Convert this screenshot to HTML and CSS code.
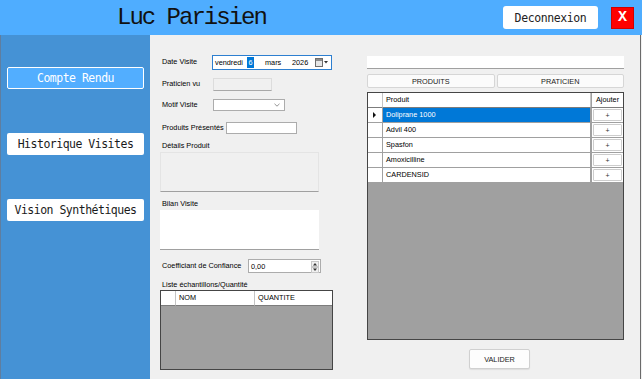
FILE: index.html
```html
<!DOCTYPE html>
<html lang="fr">
<head>
    <meta charset="UTF-8">
    <meta name="viewport" content="width=device-width, initial-scale=1.0">
    <title>Compte Rendu</title>
    <link rel="stylesheet" href="styles.css">
</head>
<body>
    <!-- barre du haut -->
    <header class="top-bar">
        <div class="user-name">Luc Parisien</div>
        <button class="logout-btn">Deconnexion</button>
        <button class="close-btn">X</button>
    </header>

    <div class="main">
        <!-- menu de gauche -->
        <nav class="side-menu">
            <button class="menu-btn active">Compte Rendu</button>
            <button class="menu-btn">Historique Visites</button>
            <button class="menu-btn">Vision Synthétiques</button>
        </nav>

        <section class="content">
            <!-- formulaire -->
            <div class="form-col">
                <div class="field-row row-date">
                    <span class="lbl lbl-date">Date Visite</span>
                    <div class="date-picker">
                        <span class="dp-day">vendredi</span>
                        <span class="dp-num">6</span>
                        <span class="dp-month">mars</span>
                        <span class="dp-year">2026</span>
                        <svg class="dp-icon" width="14" height="9" viewBox="0 0 14 9">
                            <rect x="0.5" y="0.5" width="7" height="8" fill="#e6e6e6" stroke="#6d6d6d"/>
                            <rect x="1" y="1" width="6" height="2" fill="#8a8a8a"/>
                            <path d="M9 3 L13 3 L11 5.5 Z" fill="#333"/>
                        </svg>
                    </div>
                </div>

                <div class="field-row row-praticien">
                    <span class="lbl">Praticien vu</span>
                    <div class="input input-disabled w-praticien"></div>
                </div>

                <div class="field-row row-motif">
                    <span class="lbl">Motif Visite</span>
                    <div class="input combo w-motif">
                        <svg width="6" height="4" viewBox="0 0 6 4">
                            <path d="M0.5 0.8 L3 3.2 L5.5 0.8" fill="none" stroke="#777" stroke-width="0.8"/>
                        </svg>
                    </div>
                </div>

                <div class="field-row row-produits">
                    <span class="lbl lbl-wide">Produits Présentés</span>
                    <div class="input w-produits"></div>
                </div>

                <div class="block-lbl lbl-details">Détails Produit</div>
                <div class="memo memo-readonly"></div>

                <div class="block-lbl lbl-bilan">Bilan Visite</div>
                <div class="memo"></div>

                <div class="field-row row-coef">
                    <span class="lbl lbl-coef">Coefficiant de Confiance</span>
                    <div class="input spin w-coef">
                        <span class="spin-value">0,00</span>
                        <div class="spin-btns">
                            <span class="spin-btn">
                                <svg width="6" height="4" viewBox="0 0 6 4"><path d="M1 3.5 L5 3.5 L3 1 Z" fill="#333"/></svg>
                            </span>
                            <span class="spin-btn">
                                <svg width="6" height="4" viewBox="0 0 6 4"><path d="M1 0.5 L5 0.5 L3 3 Z" fill="#333"/></svg>
                            </span>
                        </div>
                    </div>
                </div>

                <div class="block-lbl lbl-liste">Liste échantillons/Quantité</div>
                <div class="grid grid-samples">
                    <table class="grid-table">
                        <colgroup>
                            <col style="width: 15px">
                            <col style="width: 79px">
                            <col>
                        </colgroup>
                        <tr>
                            <th class="row-head"></th>
                            <th>NOM</th>
                            <th>QUANTITE</th>
                        </tr>
                    </table>
                </div>
            </div>

            <!-- produits -->
            <div class="side-col">
                <div class="search-box"></div>
                <div class="tab-btns">
                    <button class="tab-btn">PRODUITS</button>
                    <button class="tab-btn">PRATICIEN</button>
                </div>
                <div class="grid grid-products">
                    <table class="grid-table">
                        <colgroup>
                            <col style="width: 15px">
                            <col>
                            <col style="width: 32px">
                        </colgroup>
                        <tr>
                            <th class="row-head"></th>
                            <th>Produit</th>
                            <th class="col-add">Ajouter</th>
                        </tr>
                        <tr class="selected">
                            <td class="row-head"><span class="row-arrow"></span></td>
                            <td class="cell-name">Doliprane 1000</td>
                            <td class="col-add"><span class="add-btn">+</span></td>
                        </tr>
                        <tr>
                            <td class="row-head"></td>
                            <td class="cell-name">Advil 400</td>
                            <td class="col-add"><span class="add-btn">+</span></td>
                        </tr>
                        <tr>
                            <td class="row-head"></td>
                            <td class="cell-name">Spasfon</td>
                            <td class="col-add"><span class="add-btn">+</span></td>
                        </tr>
                        <tr>
                            <td class="row-head"></td>
                            <td class="cell-name">Amoxicilline</td>
                            <td class="col-add"><span class="add-btn">+</span></td>
                        </tr>
                        <tr>
                            <td class="row-head"></td>
                            <td class="cell-name">CARDENSID</td>
                            <td class="col-add"><span class="add-btn">+</span></td>
                        </tr>
                    </table>
                </div>
                <button class="valider-btn">VALIDER</button>
            </div>
        </section>
    </div>
</body>
</html>
```

FILE: styles.css
```css
/* base */
* {
    box-sizing: border-box;
}
body {
    margin: 0;
    width: 642px;
    height: 379px;
    overflow: hidden;
    background: #f0f0f0;
    display: flex;
    flex-direction: column;
    font-family: 'Liberation Sans', Arial, sans-serif;
    font-size: 7.3px;
    color: #000;
}
button {
    font-family: inherit;
    padding: 0;
    cursor: pointer;
}

/* barre du haut */
.top-bar {
    height: 35px;
    flex-shrink: 0;
    background: #4fadff;
    display: flex;
    align-items: center;
    padding-right: 8px;
}
.user-name {
    margin-left: 117px;
    font-family: 'Liberation Mono', monospace;
    font-size: 24px;
    letter-spacing: -2px;
    color: #111;
}
.logout-btn {
    margin-left: auto;
    width: 95px;
    height: 23px;
    background: #fff;
    border: none;
    border-radius: 3px;
    font-family: 'DejaVu Sans Mono', monospace;
    font-size: 11.5px;
    letter-spacing: -0.4px;
    color: #222;
}
.close-btn {
    margin-left: 13px;
    width: 23px;
    height: 22px;
    background: #f00;
    border: 1px solid #d00000;
    color: #fff;
    font-family: 'Liberation Mono', monospace;
    font-weight: bold;
    font-size: 15px;
}

/* zone principale */
.main {
    flex: 1;
    display: flex;
}
.side-menu {
    width: 150px;
    background: #4592d5;
    border-left: 1px solid #5f7ea0;
    display: flex;
    flex-direction: column;
    gap: 44px;
    padding: 32px 0 0 6px;
}
.menu-btn {
    width: 137px;
    height: 22px;
    background: #fff;
    border: none;
    border-radius: 2px;
    font-family: 'DejaVu Sans Mono', monospace;
    font-size: 11.5px;
    letter-spacing: -0.5px;
    color: #1a1a1a;
}
.menu-btn.active {
    background: #52aeff;
    border: 1.5px solid #fff;
    color: #fff;
}

.content {
    flex: 1;
    display: flex;
    gap: 27px;
    padding-left: 10px;
    border-right: 1px solid #6a6a6a;
    margin-right: 1px;
}

/* formulaire */
.form-col {
    width: 180px;
    display: flex;
    flex-direction: column;
    padding-top: 20px;
}
.field-row {
    display: flex;
    align-items: center;
}
.row-praticien { margin-top: 8px; }
.row-motif { margin-top: 8px; }
.row-produits { margin-top: 11px; }
.row-coef { margin-top: 9px; }

.lbl {
    width: 53px;
    padding-left: 2px;
    padding-bottom: 2px;
    white-space: nowrap;
}
.lbl-date { width: 52px; }
.lbl-wide { width: 66px; }
.lbl-coef { width: 88px; }

.block-lbl {
    height: 9px;
    line-height: 9px;
    padding-left: 2px;
    margin-top: 7px;
}

.input {
    height: 12px;
    background: #fff;
    border: 1px solid #acacac;
}
.input-disabled {
    height: 13px;
    background: #f0f0f0;
    border-color: #dcdcdc;
    border-bottom-color: #a8a8a8;
}
.w-praticien { width: 59px; }
.w-motif { width: 72px; }
.w-produits { width: 71px; }
.w-coef { width: 73px; height: 14px; }

.combo {
    display: flex;
    align-items: center;
    justify-content: flex-end;
    padding-right: 4px;
}

/* date */
.date-picker {
    width: 120px;
    height: 15px;
    background: #fff;
    border: 1px solid #2d7fd0;
    display: flex;
    align-items: center;
    padding-left: 2px;
}
.dp-day { width: 32px; }
.dp-num {
    width: 7px;
    height: 11px;
    line-height: 11px;
    background: #0078d7;
    color: #fff;
    text-align: center;
    margin-right: 11px;
}
.dp-month { width: 27px; }
.dp-year { width: 23px; }
.dp-icon { display: block; }

/* zones de texte */
.memo {
    width: 159px;
    height: 40px;
    margin-top: 2px;
    background: #fff;
    border-bottom: 1px solid #a0a0a0;
}
.memo-readonly {
    background: #f0f0f0;
    border: 1px solid #e4e4e4;
    border-bottom-color: #a0a0a0;
}

/* numerique */
.spin {
    display: flex;
    align-items: center;
    padding-left: 2px;
}
.spin-value { flex: 1; }
.spin-btns {
    display: flex;
    flex-direction: column;
    height: 100%;
    width: 9px;
    padding: 1px 1px 1px 0;
}
.spin-btn {
    flex: 1;
    display: flex;
    align-items: center;
    justify-content: center;
    background: #f0f0f0;
    border: 0.5px solid #c8c8c8;
}

/* grilles */
.grid {
    background: #a0a0a0;
    border: 1px solid #454545;
}
.grid-samples {
    width: 173px;
    height: 80px;
    margin-top: 1px;
}
.grid-table {
    width: 100%;
    table-layout: fixed;
    border-spacing: 0;
}
.grid-table th,
.grid-table td {
    height: 14px;
    line-height: 14px;
    padding: 0 0 0 3px;
    background: #fff;
    font-weight: normal;
    text-align: left;
    white-space: nowrap;
    overflow: hidden;
    border-right: 1px solid #a0a0a0;
    border-bottom: 1px solid #a0a0a0;
}
.grid-table th {
    border-right-color: #c4c4c4;
    border-bottom-color: #7c7c7c;
}
.grid-table th:last-child,
.grid-table td:last-child {
    border-right: none;
}
.grid-table .row-head {
    padding: 0;
}
.grid-table .col-add {
    padding: 0 1px;
    border-left: 1px solid #a0a0a0;
    text-align: center;
}
.selected .cell-name {
    background: #0078d7;
    color: #fff;
}
.row-arrow {
    display: block;
    margin-left: 5px;
    width: 0;
    height: 0;
    border-left: 3.5px solid #111;
    border-top: 3px solid transparent;
    border-bottom: 3px solid transparent;
}
.add-btn {
    display: block;
    height: 12px;
    line-height: 11px;
    background: #fff;
    border: 1px solid #cdcdcd;
    border-radius: 1px;
    font-size: 7px;
    color: #333;
}

/* colonne produits */
.side-col {
    width: 257px;
    display: flex;
    flex-direction: column;
    padding-top: 21px;
}
.search-box {
    height: 13px;
    background: #fff;
    border-bottom: 1px solid #a0a0a0;
}
.tab-btns {
    display: flex;
    gap: 2px;
    margin-top: 5px;
}
.tab-btn {
    flex: 1;
    height: 14px;
    background: #fbfbfb;
    border: 1px solid #d6d6d6;
    border-radius: 2px;
    font-size: 7.3px;
    color: #1a1a1a;
}
.grid-products {
    height: 248px;
    margin-top: 4px;
}
.valider-btn {
    width: 61px;
    height: 20px;
    margin: 9px 0 0 102px;
    background: #fdfdfd;
    border: 1px solid #d0d0d0;
    border-radius: 2px;
    box-shadow: 0 1px 1px rgba(0, 0, 0, 0.08);
    font-size: 7.3px;
    color: #1a1a1a;
}
```
